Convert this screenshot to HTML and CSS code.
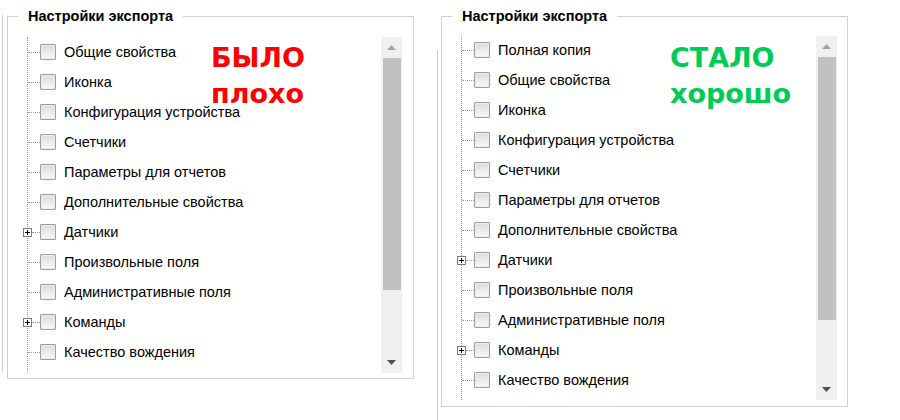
FILE: index.html
```html
<!DOCTYPE html>
<html lang="ru">
<head>
    <meta charset="UTF-8">
    <title>Настройки экспорта</title>
    <link rel="stylesheet" href="styles.css">
</head>
<body>

<div class="page">

    <!-- before -->
    <div class="pane pane-before">
        <div class="edge"></div>
        <fieldset class="export">
            <legend>Настройки экспорта</legend>
            <div class="export-body">
                <div class="stamp stamp-bad">БЫЛО<br>плохо</div>
                <div class="tree">
                    <div class="node"><span class="stub"></span><span class="check"></span><span class="label">Общие свойства</span></div>
                    <div class="node"><span class="stub"></span><span class="check"></span><span class="label">Иконка</span></div>
                    <div class="node"><span class="stub"></span><span class="check"></span><span class="label">Конфигурация устройства</span></div>
                    <div class="node"><span class="stub"></span><span class="check"></span><span class="label">Счетчики</span></div>
                    <div class="node"><span class="stub"></span><span class="check"></span><span class="label">Параметры для отчетов</span></div>
                    <div class="node"><span class="stub"></span><span class="check"></span><span class="label">Дополнительные свойства</span></div>
                    <div class="node"><svg class="toggle" width="9" height="9" viewBox="0 0 9 9"><rect x="0.5" y="0.5" width="8" height="8" fill="#fff" stroke="#7b7b7b"/><path d="M2 4.5h5M4.5 2v5" stroke="#000"/></svg><span class="stub stub-short"></span><span class="check"></span><span class="label">Датчики</span></div>
                    <div class="node"><span class="stub"></span><span class="check"></span><span class="label">Произвольные поля</span></div>
                    <div class="node"><span class="stub"></span><span class="check"></span><span class="label">Административные поля</span></div>
                    <div class="node"><svg class="toggle" width="9" height="9" viewBox="0 0 9 9"><rect x="0.5" y="0.5" width="8" height="8" fill="#fff" stroke="#7b7b7b"/><path d="M2 4.5h5M4.5 2v5" stroke="#000"/></svg><span class="stub stub-short"></span><span class="check"></span><span class="label">Команды</span></div>
                    <div class="node"><span class="stub"></span><span class="check"></span><span class="label">Качество вождения</span></div>
                </div>
                <div class="scrollbar">
                    <div class="scroll-btn"><svg width="9" height="5" viewBox="0 0 9 5"><polygon points="0,5 4.5,0 9,5" fill="#a3a3a3"/></svg></div>
                    <div class="thumb"></div>
                    <div class="track"></div>
                    <div class="scroll-btn"><svg width="9" height="5" viewBox="0 0 9 5"><polygon points="0,0 9,0 4.5,5" fill="#505050"/></svg></div>
                </div>
            </div>
        </fieldset>
    </div>

    <!-- after -->
    <div class="pane pane-after">
        <div class="edge"></div>
        <fieldset class="export">
            <legend>Настройки экспорта</legend>
            <div class="export-body">
                <div class="stamp stamp-good">СТАЛО<br>хорошо</div>
                <div class="tree">
                    <div class="node"><span class="stub"></span><span class="check"></span><span class="label">Полная копия</span></div>
                    <div class="node"><span class="stub"></span><span class="check"></span><span class="label">Общие свойства</span></div>
                    <div class="node"><span class="stub"></span><span class="check"></span><span class="label">Иконка</span></div>
                    <div class="node"><span class="stub"></span><span class="check"></span><span class="label">Конфигурация устройства</span></div>
                    <div class="node"><span class="stub"></span><span class="check"></span><span class="label">Счетчики</span></div>
                    <div class="node"><span class="stub"></span><span class="check"></span><span class="label">Параметры для отчетов</span></div>
                    <div class="node"><span class="stub"></span><span class="check"></span><span class="label">Дополнительные свойства</span></div>
                    <div class="node"><svg class="toggle" width="9" height="9" viewBox="0 0 9 9"><rect x="0.5" y="0.5" width="8" height="8" fill="#fff" stroke="#7b7b7b"/><path d="M2 4.5h5M4.5 2v5" stroke="#000"/></svg><span class="stub stub-short"></span><span class="check"></span><span class="label">Датчики</span></div>
                    <div class="node"><span class="stub"></span><span class="check"></span><span class="label">Произвольные поля</span></div>
                    <div class="node"><span class="stub"></span><span class="check"></span><span class="label">Административные поля</span></div>
                    <div class="node"><svg class="toggle" width="9" height="9" viewBox="0 0 9 9"><rect x="0.5" y="0.5" width="8" height="8" fill="#fff" stroke="#7b7b7b"/><path d="M2 4.5h5M4.5 2v5" stroke="#000"/></svg><span class="stub stub-short"></span><span class="check"></span><span class="label">Команды</span></div>
                    <div class="node"><span class="stub"></span><span class="check"></span><span class="label">Качество вождения</span></div>
                </div>
                <div class="scrollbar">
                    <div class="scroll-btn"><svg width="9" height="5" viewBox="0 0 9 5"><polygon points="0,5 4.5,0 9,5" fill="#a3a3a3"/></svg></div>
                    <div class="thumb"></div>
                    <div class="track"></div>
                    <div class="scroll-btn"><svg width="9" height="5" viewBox="0 0 9 5"><polygon points="0,0 9,0 4.5,5" fill="#505050"/></svg></div>
                </div>
            </div>
        </fieldset>
    </div>

</div>

</body>
</html>
```

FILE: styles.css
```css
/* Export settings panels, before / after */
body {
    margin: 0;
    background-color: #fff;
    font-family: "Liberation Sans", Arial, sans-serif;
    font-size: 14.5px;
    color: #000;
}

.page {
    display: flex;
    align-items: flex-start;
}

.pane {
    display: flex;
    align-items: flex-start;
}

/* border of the neighbouring panel */
.edge {
    width: 1px;
    background-color: #cbcbcb;
}

.pane-before .edge {
    margin-left: 2px;
    margin-top: 15px;
    height: 358px;
}

.pane-after {
    margin-left: 23px;
}

.pane-after .edge {
    margin-top: 50px;
    height: 370px;
}

.export {
    box-sizing: border-box;
    width: 407px;
    min-width: 0;
    margin: 8px 0 0 4px;
    padding: 0;
    border: 1px solid #d0d0d0;
}

.pane-after .export {
    margin-left: 3px;
}

.export legend {
    margin-left: 10px;
    padding: 0 10px;
    font-weight: bold;
    font-size: 14.5px;
    line-height: 16px;
}

.export-body {
    position: relative;
    display: flex;
    height: 336px;
    padding: 13px 11px 5px 0;
}

.pane-after .export-body {
    height: 364px;
    padding: 12px 10px 6px 0;
}

/* tree */
.tree {
    flex: 1;
    margin-left: 19px;
    border-left: 1px dotted #9a9a9a;
}

.pane-after .tree {
    margin-top: -1px;
}

.node {
    display: flex;
    align-items: center;
    height: 30px;
}

.stub {
    width: 12px;
    height: 0;
    border-top: 1px dotted #9a9a9a;
}

.stub-short {
    width: 8px;
}

.toggle {
    display: block;
    margin-left: -5px;
}

.check {
    box-sizing: border-box;
    width: 16px;
    height: 16px;
    border: 1px solid #9e9e9e;
    border-radius: 1px;
    box-shadow: inset 0 0 0 1px #ececec;
    background: linear-gradient(#dcdcdc, #f8f8f8);
}

.label {
    margin-left: 8px;
    white-space: nowrap;
}

/* scrollbar */
.scrollbar {
    display: flex;
    flex-direction: column;
    width: 21px;
    background-color: #f0f0f0;
}

.scroll-btn {
    display: flex;
    align-items: center;
    justify-content: center;
    height: 21px;
}

.thumb {
    height: 232px;
    margin: 0 1px 0 2px;
    background-color: #c1c1c1;
}

.pane-after .thumb {
    height: 263px;
}

.track {
    flex: 1;
}

/* before / after stamps over the panels */
.stamp {
    position: absolute;
    top: 16px;
    font-family: "DejaVu Sans", Verdana, sans-serif;
    font-weight: bold;
    font-size: 27px;
    line-height: 36px;
}

.stamp-bad {
    left: 203px;
    color: #ff0000;
}

.stamp-good {
    left: 228px;
    color: #00cc55;
}
```
